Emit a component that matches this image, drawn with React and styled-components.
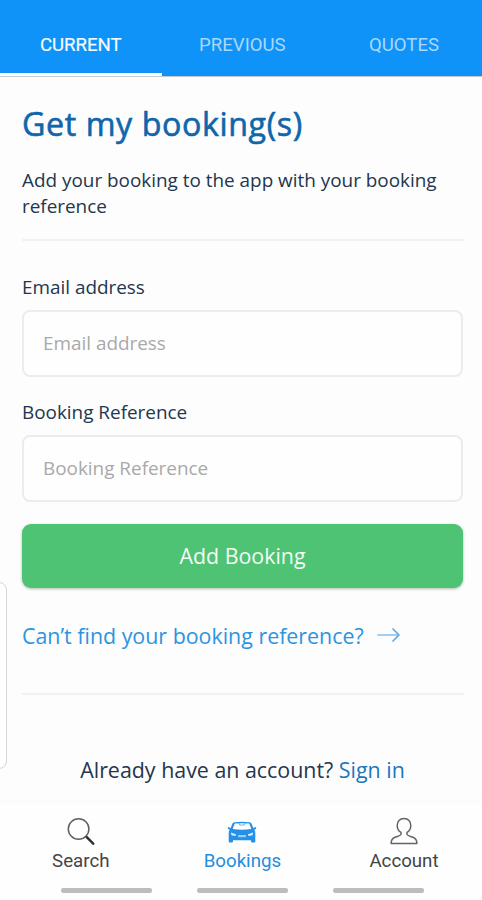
import React, { useState } from 'react';
import styled, { createGlobalStyle } from 'styled-components';

const GlobalStyle = createGlobalStyle`
  body {
    margin: 0;
    background-color: #fdfdfd;
  }

  * {
    box-sizing: border-box;
  }
`;

// --- Styled Components ---

const MobileContainer = styled.div`
  width: 482px;
  height: 900px;
  background-color: #fdfdfd;
  position: relative;
  display: flex;
  flex-direction: column;
  overflow: hidden;
  font-family: 'Open Sans', sans-serif;
  color: #23364d;
`;

const TabBar = styled.header`
  height: 77px;
  flex-shrink: 0;
  display: grid;
  grid-template-columns: repeat(3, 161.6px);
  background-color: #1093f8;
  border-bottom: 1px solid #c3c9cf;
`;

const Tab = styled.button`
  border: none;
  border-bottom: 3px solid ${({ $active }) => ($active ? '#ffffff' : 'transparent')};
  background: none;
  padding: 17px 0 0;
  font-family: Roboto, sans-serif;
  font-size: 18.6px;
  font-weight: 400;
  white-space: nowrap;
  color: ${({ $active }) => ($active ? '#f4faff' : '#a9d8fd')};
  -webkit-text-stroke: ${({ $active }) => ($active ? '0.2px' : '0')};
  cursor: pointer;
`;

const MainContent = styled.main`
  flex: 1;
  padding: 25px 18px 0 22px;
  display: flex;
  flex-direction: column;
`;

const Title = styled.h1`
  margin: 0;
  font-size: 32.2px;
  line-height: 44px;
  font-weight: 500;
  letter-spacing: 0.6px;
  white-space: nowrap;
  color: #0f66ab;
  -webkit-text-stroke: 0.6px #0f66ab;
`;

const Description = styled.p`
  margin: 22px 0 0;
  font-size: 18.9px;
  line-height: 25.5px;
`;

const Divider = styled.hr`
  width: 100%;
  height: 2px;
  margin: ${({ $top }) => $top}px 0 0;
  border: none;
  background-color: #f1f2f2;
`;

const BookingForm = styled.form`
  display: flex;
  flex-direction: column;
  padding: 33px 1px 0 0;
`;

const Field = styled.label`
  display: flex;
  flex-direction: column;
  margin-bottom: 22px;
`;

const FieldLabel = styled.span`
  font-size: 18.9px;
  line-height: 26px;
  margin-bottom: 10px;
`;

const FieldInput = styled.input`
  height: 67px;
  width: 100%;
  padding: 0 19px 2px;
  border: 2px solid #ebeded;
  border-radius: 8px;
  background-color: #fefefe;
  font-family: inherit;
  font-size: 18.9px;
  color: #23364d;
  outline: none;

  &::placeholder {
    color: #a9a9a9;
    opacity: 1;
  }
`;

const SubmitButton = styled.button`
  height: 64px;
  padding: 0 0 1px;
  border: none;
  border-radius: 9px;
  background-color: #4fc374;
  box-shadow: 0 1px 3px rgba(60, 90, 60, 0.4);
  font-family: inherit;
  font-size: 21.4px;
  color: #f3fbf5;
  cursor: pointer;
`;

const HelpLink = styled.a`
  display: flex;
  align-items: center;
  gap: 13px;
  margin-top: 34px;
  font-size: 21.4px;
  line-height: 28px;
  white-space: nowrap;
  color: #2c94de;
  cursor: pointer;
`;

const SignInText = styled.p`
  margin: 61px 1px 0 0;
  font-size: 21.4px;
  line-height: 28px;
  text-align: center;
  white-space: nowrap;
`;

const SignInLink = styled.a`
  color: #1c76bd;
  cursor: pointer;
`;

// 왼쪽 가장자리에 걸쳐 있는 패널 손잡이
const EdgeHandle = styled.div`
  position: absolute;
  left: -12px;
  top: 582px;
  width: 19px;
  height: 187px;
  border: 1.5px solid #d3d5d5;
  border-radius: 8px;
  background-color: #fefefe;
`;

const BottomNav = styled.nav`
  height: 97px;
  flex-shrink: 0;
  display: grid;
  grid-template-columns: repeat(3, 161.6px);
  grid-template-rows: 85px 5px;
  background-color: #fefefe;
  box-shadow: 0 -2px 5px rgba(0, 0, 0, 0.02);
`;

const NavItem = styled.a`
  display: flex;
  flex-direction: column;
  align-items: center;
  padding-top: 14px;
  font-family: Roboto, sans-serif;
  font-size: 18.7px;
  line-height: 24px;
  color: ${({ $active }) => ($active ? '#248ede' : '#444444')};
  cursor: pointer;

  svg {
    display: block;
    margin-bottom: 4px;
  }
`;

const SystemBar = styled.div`
  grid-column: 1 / -1;
  display: flex;
  gap: 45px;
  padding-left: 61px;
`;

const SystemHandle = styled.span`
  width: 91px;
  height: 5px;
  border-radius: 2px;
  background-color: #bdbdbd;
`;

// --- Icons ---

const ArrowIcon = () => (
  <svg width="24" height="16" viewBox="0 0 24 16" fill="none" strokeLinecap="round" strokeLinejoin="round">
    <path d="M1 7H21" stroke="#83bfee" strokeWidth="1.7" />
    <path d="M16 1L22 7L16 13" stroke="#5daae5" strokeWidth="1.7" />
  </svg>
);

const SearchIcon = () => (
  <svg width="28" height="28" viewBox="0 0 28 28" fill="none">
    <circle cx="11.6" cy="12" r="10.3" stroke="#606060" strokeWidth="1.5" />
    <path d="M18.8 19.4L20.5 21" stroke="#404040" strokeWidth="1.5" />
    <path d="M20 20.4L26.2 26.7" stroke="#303030" strokeWidth="2.5" strokeLinecap="round" />
  </svg>
);

const CarIcon = () => (
  <svg width="30" height="28" viewBox="0 0 30 28">
    <path
      fill="#2490ea"
      fillRule="evenodd"
      d="M7.4 5.2Q15 4.2 22.6 5.2Q24 5.4 24.5 6.6L26.3 11L28.8 10Q29.6 11 28.8 12L27.3 12.8Q28.3 14 28.3 16V24.5Q28.3 25.6 27.2 25.6H25.2Q24 25.6 24 24.5V23.2H6V24.5Q6 25.6 4.8 25.6H2.8Q1.7 25.6 1.7 24.5V16Q1.7 14 2.7 12.8L1.2 12Q0.4 11 1.2 10L3.7 11L5.5 6.6Q6 5.4 7.4 5.2ZM7.8 6.6L5.6 12Q15 13.6 24.4 12L22.2 6.6Q15 5.8 7.8 6.6Z"
    />
    <path d="M11.8 6.2L13 8H17L18.2 6.2" fill="none" stroke="#65b1ee" strokeWidth="1.1" />
    <path d="M4 15.6L9 17.2V18.8H6Q4.4 18.8 4 17Z" fill="#d3eafc" />
    <path d="M26 15.6L21 17.2V18.8H24Q25.6 18.8 26 17Z" fill="#d3eafc" />
    <path d="M10.8 18H19.2L18.6 20.2H11.4Z" fill="#9bcef7" />
  </svg>
);

const AccountIcon = () => (
  <svg width="28" height="28" viewBox="0 0 28 28" fill="none" stroke="#646464" strokeWidth="1.5" strokeLinejoin="round">
    <path d="M14 1.6C9.7 1.6 7.2 4.4 7.2 8.4C7.2 11.8 8.8 14 11 15.4V17.4C10.5 19 7.6 19.2 4.6 20.5C2 21.6 1.1 23.3 1.1 26.6H26.9C26.9 23.3 26 21.6 23.4 20.5C20.4 19.2 17.5 19 17 17.4V15.4C19.2 14 20.8 11.8 20.8 8.4C20.8 4.4 18.3 1.6 14 1.6Z" />
  </svg>
);

const tabs = ['CURRENT', 'PREVIOUS', 'QUOTES'];

const navItems = [
  { label: 'Search', Icon: SearchIcon },
  { label: 'Bookings', Icon: CarIcon },
  { label: 'Account', Icon: AccountIcon },
];

const App = () => {
  const [activeTab, setActiveTab] = useState('CURRENT');
  const [email, setEmail] = useState('');
  const [reference, setReference] = useState('');

  const handleSubmit = (e) => {
    e.preventDefault();
  };

  return (
    <>
      <GlobalStyle />
      <MobileContainer>
        <TabBar>
          {tabs.map((tab) => (
            <Tab key={tab} type="button" $active={tab === activeTab} onClick={() => setActiveTab(tab)}>
              {tab}
            </Tab>
          ))}
        </TabBar>

        <MainContent>
          <Title>Get my booking(s)</Title>
          <Description>Add your booking to the app with your booking reference</Description>
          <Divider $top={20} />

          <BookingForm onSubmit={handleSubmit}>
            <Field>
              <FieldLabel>Email address</FieldLabel>
              <FieldInput
                placeholder="Email address"
                value={email}
                onChange={(e) => setEmail(e.target.value)}
              />
            </Field>
            <Field>
              <FieldLabel>Booking Reference</FieldLabel>
              <FieldInput
                placeholder="Booking Reference"
                value={reference}
                onChange={(e) => setReference(e.target.value)}
              />
            </Field>
            <SubmitButton type="submit">Add Booking</SubmitButton>
          </BookingForm>

          <HelpLink>
            Can’t find your booking reference?
            <ArrowIcon />
          </HelpLink>
          <Divider $top={43} />
          <SignInText>
            Already have an account? <SignInLink>Sign in</SignInLink>
          </SignInText>
        </MainContent>

        <BottomNav>
          {navItems.map(({ label, Icon }) => (
            <NavItem key={label} $active={label === 'Bookings'}>
              <Icon />
              {label}
            </NavItem>
          ))}
          <SystemBar>
            <SystemHandle />
            <SystemHandle />
            <SystemHandle />
          </SystemBar>
        </BottomNav>

        <EdgeHandle />
      </MobileContainer>
    </>
  );
};

export default App;
